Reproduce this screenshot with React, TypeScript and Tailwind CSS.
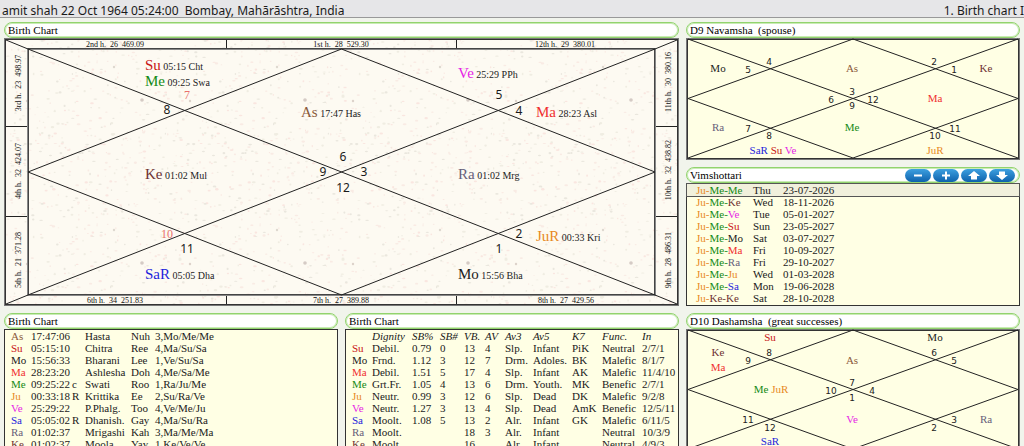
import React from "react";

type Label = [x: number, y: number, text: string, color?: string];

const C: Record<string, string> = {
  As: "#8b5a3c",
  Su: "#c81414",
  Mo: "#1a1a1a",
  Ma: "#f03030",
  Me: "#148a14",
  Ju: "#e88a1e",
  Ve: "#e61ee6",
  Sa: "#1e1edc",
  Ra: "#66607a",
  Ke: "#6e3232",
};

const colorOf = (name: string) => C[name.slice(0, 2)];

const SERIF = "'Liberation Serif', serif";
const SANS = "'DejaVu Sans', sans-serif";
const NUMBERS = "'Noto Sans', sans-serif";

function seeded(seed: number) {
  let a = seed;
  return () => {
    a = (a + 0x6d2b79f5) | 0;
    let t = Math.imul(a ^ (a >>> 15), 1 | a);
    t = (t + Math.imul(t ^ (t >>> 7), 61 | t)) ^ t;
    return ((t ^ (t >>> 14)) >>> 0) / 4294967296;
  };
}

const TILE = 163;
const rand = seeded(4217);
const SPECKS = Array.from({ length: 420 }, () => ({
  x: rand() * TILE,
  y: rand() * TILE,
  rx: 0.5 + rand() * 1.4,
  ry: 0.4 + rand() * 0.8,
  fill: ["#fae6e0", "#f0ede2", "#f9ebe4", "#eae7de"][Math.floor(rand() * 4)],
}));

function Title({ children, extra }: { children: React.ReactNode; extra?: React.ReactNode }) {
  return (
    <div className="flex h-4 items-center justify-between rounded-full border border-[#92d36e] bg-white pr-1 pl-[3px] ring-1 ring-[#c9ebb5] ring-inset">
      <h2 className="font-['Liberation_Serif',serif] text-[11px] leading-[14px] whitespace-pre text-black">{children}</h2>
      {extra}
    </div>
  );
}

function Panel({
  title,
  extra,
  className = "",
  children,
}: {
  title: string;
  extra?: React.ReactNode;
  className?: string;
  children: React.ReactNode;
}) {
  return (
    <section className={className}>
      <Title extra={extra}>{title}</Title>
      {children}
    </section>
  );
}

const PLANETS: { x: number; y: number; name: string; pos: string }[] = [
  { x: 141, y: 32, name: "Su", pos: "05:15 Cht" },
  { x: 141, y: 48, name: "Me", pos: "09:25 Swa" },
  { x: 297, y: 79, name: "As", pos: "17:47 Has" },
  { x: 454, y: 40, name: "Ve", pos: "25:29 PPh" },
  { x: 532, y: 79, name: "Ma", pos: "28:23 Asl" },
  { x: 141, y: 141, name: "Ke", pos: "01:02 Mul" },
  { x: 454, y: 141, name: "Ra", pos: "01:02 Mrg" },
  { x: 532, y: 203, name: "JuR", pos: "00:33 Kri" },
  { x: 141, y: 241, name: "SaR", pos: "05:05 Dha" },
  { x: 454, y: 241, name: "Mo", pos: "15:56 Bha" },
];

const HOUSES: Label[] = [
  [163, 76, "8"],
  [495, 61, "5"],
  [515, 77, "4"],
  [339, 123, "6"],
  [319, 138, "9"],
  [360, 138, "3"],
  [339, 154, "12"],
  [183, 215, "11"],
  [515, 200, "2"],
  [495, 215, "1"],
];

const RED_HOUSES: Label[] = [
  [183, 61, "7"],
  [163, 200, "10"],
];

const EDGES: { x: number; y: number; text: string; turned?: boolean }[] = [
  { x: 111, y: 9, text: "2nd h.  26  469.09" },
  { x: 337, y: 9, text: "1st h.  28  529.30" },
  { x: 561, y: 9, text: "12th h.  29  380.01" },
  { x: 111, y: 265, text: "6th h.  34  251.83" },
  { x: 337, y: 265, text: "7th h.  27  389.88" },
  { x: 562, y: 265, text: "8th h.  27  429.56" },
  { x: 13, y: 45, text: "3rd h.  23  498.97", turned: true },
  { x: 13, y: 133, text: "4th h.  32  424.07", turned: true },
  { x: 13, y: 222, text: "5th h.  21  371.28", turned: true },
  { x: 663, y: 44, text: "11th h.  30  380.16", turned: true },
  { x: 663, y: 132, text: "10th h.  32  438.82", turned: true },
  { x: 663, y: 222, text: "9th h.  28  486.31", turned: true },
];

function BirthChart() {
  return (
    <svg viewBox="0 0 675 268" className="block w-full" role="img" aria-label="Birth chart">
      <defs>
        <pattern id="paper" width={TILE} height={TILE} patternUnits="userSpaceOnUse">
          <rect width={TILE} height={TILE} fill="#fdfaf2" />
          {SPECKS.map((s, i) => (
            <ellipse key={i} cx={s.x} cy={s.y} rx={s.rx} ry={s.ry} fill={s.fill} />
          ))}
          <circle cx="138" cy="62" r="1.8" fill="#d5cbc5" />
          <circle cx="110" cy="29" r="1.2" fill="#dfd9d0" />
          <circle cx="23" cy="63" r="1.2" fill="#ddd2ca" />
        </pattern>
      </defs>
      <rect x="1" y="1" width="673" height="266" fill="url(#paper)" stroke="#777" strokeWidth="2" />
      <rect x="1.5" y="1.5" width="672" height="265" fill="none" stroke="#333" />
      <rect x="24" y="11" width="627" height="246" fill="none" stroke="#888" strokeWidth="2" />
      <rect x="24.5" y="10.5" width="626" height="246" fill="none" stroke="#444" />
      <g stroke="#222" strokeWidth="1" fill="none">
        <path d="M24 11 651 257M651 11 24 257M337.5 11 24 134 337.5 257 651 134Z" />
        <path d="M2 2 24 11M673 2 651 11M2 266 24 257M673 266 651 257" />
        <path d="M222.5 2V10M452.5 2V10M222.5 258V266M452.5 258V266M2 88.5H23M2 178.5H23M652 88.5H673M652 178.5H673" />
      </g>
      <g fontFamily={SERIF} fontSize="8" fill="#111" textAnchor="middle">
        {EDGES.map((e) => (
          <text
            key={e.text}
            x={e.x}
            y={e.y}
            className="whitespace-pre"
            transform={e.turned ? `rotate(-90 ${e.x} ${e.y}) translate(0 4)` : undefined}
          >
            {e.text}
          </text>
        ))}
      </g>
      <g fontFamily={SERIF}>
        {PLANETS.map((p) => (
          <text key={p.name} x={p.x} y={p.y}>
            <tspan fontSize="15" fill={colorOf(p.name)}>{p.name}</tspan>
            <tspan fontSize="10" fill="#222">{" " + p.pos}</tspan>
          </text>
        ))}
      </g>
      <g fontFamily={NUMBERS} fontSize="12" fill="#1a1a1a" textAnchor="middle">
        {HOUSES.map(([x, y, t]) => (
          <text key={t} x={x} y={y}>{t}</text>
        ))}
      </g>
      <g fontFamily={SERIF} fontSize="12" fill="#e8706c" textAnchor="middle">
        {RED_HOUSES.map(([x, y, t]) => (
          <text key={t} x={x} y={y}>{t}</text>
        ))}
      </g>
    </svg>
  );
}

type Group = { x: number; y: number; names: string[] };

function SmallChart({ label, planets, houses }: { label: string; planets: Group[]; houses: Label[] }) {
  return (
    <svg viewBox="0 0 334 122" className="block w-full" role="img" aria-label={label}>
      <rect x="1" y="1" width="332" height="120" fill="#ffffe4" stroke="#777" strokeWidth="2" />
      <rect x="1.5" y="1.5" width="331" height="119" fill="none" stroke="#333" />
      <path
        d="M2 1 332 120M332 1 2 120M167 1 2 60.5 167 120 332 60.5Z"
        fill="none"
        stroke="#222"
        strokeWidth="1"
      />
      <g fontFamily={SERIF} fontSize="11" textAnchor="middle">
        {planets.map((g) => (
          <text key={g.names.join()} x={g.x} y={g.y}>
            {g.names.map((n, i) => (
              <tspan key={n} fill={colorOf(n)}>{(i ? " " : "") + n}</tspan>
            ))}
          </text>
        ))}
      </g>
      <g fontFamily={SANS} fontSize="9" fill="#222" textAnchor="middle">
        {houses.map(([x, y, t]) => (
          <text key={t} x={x} y={y}>{t}</text>
        ))}
      </g>
    </svg>
  );
}

const D9_PLANETS: Group[] = [
  { x: 32, y: 34, names: ["Mo"] },
  { x: 166, y: 34, names: ["As"] },
  { x: 300, y: 34, names: ["Ke"] },
  { x: 249, y: 64, names: ["Ma"] },
  { x: 32, y: 93, names: ["Ra"] },
  { x: 166, y: 93, names: ["Me"] },
  { x: 87, y: 116, names: ["SaR", "Su", "Ve"] },
  { x: 249, y: 116, names: ["JuR"] },
];

const D9_HOUSES: Label[] = [
  [83, 27, "4"],
  [62, 35, "5"],
  [248, 27, "2"],
  [268, 35, "1"],
  [166, 57, "3"],
  [145, 65, "6"],
  [187, 65, "12"],
  [166, 71, "9"],
  [62, 94, "7"],
  [83, 101, "8"],
  [249, 101, "10"],
  [269, 94, "11"],
];

const D10_PLANETS: Group[] = [
  { x: 84, y: 12, names: ["Su"] },
  { x: 249, y: 12, names: ["Mo"] },
  { x: 32, y: 27, names: ["Ke"] },
  { x: 32, y: 42, names: ["Ma"] },
  { x: 166, y: 35, names: ["As"] },
  { x: 85, y: 64, names: ["Me", "JuR"] },
  { x: 166, y: 94, names: ["Ve"] },
  { x: 300, y: 94, names: ["Ra"] },
  { x: 84, y: 116, names: ["SaR"] },
];

const D10_HOUSES: Label[] = [
  [83, 27, "8"],
  [62, 35, "9"],
  [248, 27, "6"],
  [268, 35, "5"],
  [166, 57, "7"],
  [145, 65, "10"],
  [186, 65, "4"],
  [166, 72, "1"],
  [62, 94, "11"],
  [84, 102, "12"],
  [248, 102, "2"],
  [268, 94, "3"],
];

const DASHAS: [string, string, string][] = [
  ["Ju-Me-Me", "Thu", "23-07-2026"],
  ["Ju-Me-Ke", "Wed", "18-11-2026"],
  ["Ju-Me-Ve", "Tue", "05-01-2027"],
  ["Ju-Me-Su", "Sun", "23-05-2027"],
  ["Ju-Me-Mo", "Sat", "03-07-2027"],
  ["Ju-Me-Ma", "Fri", "10-09-2027"],
  ["Ju-Me-Ra", "Fri", "29-10-2027"],
  ["Ju-Me-Ju", "Wed", "01-03-2028"],
  ["Ju-Me-Sa", "Mon", "19-06-2028"],
  ["Ju-Ke-Ke", "Sat", "28-10-2028"],
];

function Periods() {
  return (
    <div className="h-[123px] border border-[#333] bg-[#ffffe4]">
      <table className="w-full table-fixed border-collapse text-[11px] leading-3">
        <colgroup>
          <col className="w-[66px]" />
          <col className="w-[30px]" />
          <col />
        </colgroup>
        <tbody>
          {DASHAS.map(([lords, day, date], row) => (
            <tr key={date} className={row === 0 ? "bg-[#f1f0dc] outline outline-[#555]" : ""}>
              <td className="p-0 pl-[9px] whitespace-nowrap">
                {lords.split("-").map((l, i) => (
                  <span key={i} style={{ color: colorOf(l) }}>
                    {l}
                    {i < 2 ? "-" : ""}
                  </span>
                ))}
              </td>
              <td className="p-0">{day}</td>
              <td className="p-0">{date}</td>
            </tr>
          ))}
        </tbody>
      </table>
    </div>
  );
}

const BUTTONS: { label: string; d: string }[] = [
  { label: "Collapse level", d: "M8 5.5h8v2H8z" },
  { label: "Expand level", d: "M8 5.5h3v-3h2v3h3v2h-3v3h-2v-3H8z" },
  { label: "Previous periods", d: "M12 2 18 7h-3v3.5H9V7H6z" },
  { label: "Next periods", d: "M12 11 18 6h-3V2.5H9V6H6z" },
];

function PeriodButtons() {
  return (
    <div className="flex gap-[2px]">
      {BUTTONS.map((b) => (
        <button
          key={b.label}
          type="button"
          aria-label={b.label}
          className="h-[13px] w-[26px] rounded-full bg-linear-to-b from-[#3da0e0] to-[#0d62ac]"
        >
          <svg viewBox="0 0 24 13" className="mx-auto block h-[13px] w-6" fill="#fff">
            <path d={b.d} />
          </svg>
        </button>
      ))}
    </div>
  );
}

const POSITIONS: string[][] = [
  ["As", "17:47:06", "", "Hasta", "Nuh", "3,Mo/Me/Me"],
  ["Su", "05:15:10", "", "Chitra", "Ree", "4,Ma/Su/Sa"],
  ["Mo", "15:56:33", "", "Bharani", "Lee", "1,Ve/Su/Sa"],
  ["Ma", "28:23:20", "", "Ashlesha", "Doh", "4,Me/Sa/Me"],
  ["Me", "09:25:22", "c", "Swati", "Roo", "1,Ra/Ju/Me"],
  ["Ju", "00:33:18", "R", "Krittika", "Ee", "2,Su/Ra/Ve"],
  ["Ve", "25:29:22", "", "P.Phalg.", "Too", "4,Ve/Me/Ju"],
  ["Sa", "05:05:02", "R", "Dhanish.", "Gay", "4,Ma/Su/Ra"],
  ["Ra", "01:02:37", "", "Mrigashi", "Kah", "3,Ma/Me/Ma"],
  ["Ke", "01:02:37", "", "Moola", "Yay", "1,Ke/Ve/Ve"],
];

const DIGNITY_HEAD = ["", "Dignity", "SB%", "SB#", "VB.", "AV", "Av3", "Av5", "K7", "Func.", "In"];

const DIGNITIES: string[][] = [
  ["Su", "Debil.", "0.79", "0", "13", "4", "Slp.", "Infant", "PiK", "Neutral", "2/7/1"],
  ["Mo", "Frnd.", "1.12", "3", "12", "7", "Drm.", "Adoles.", "BK", "Malefic", "8/1/7"],
  ["Ma", "Debil.", "1.51", "5", "17", "4", "Slp.", "Infant", "AK", "Malefic", "11/4/10"],
  ["Me", "Grt.Fr.", "1.05", "4", "13", "6", "Drm.", "Youth.", "MK", "Benefic", "2/7/1"],
  ["Ju", "Neutr.", "0.99", "3", "12", "6", "Slp.", "Dead", "DK", "Malefic", "9/2/8"],
  ["Ve", "Neutr.", "1.27", "3", "13", "4", "Slp.", "Dead", "AmK", "Benefic", "12/5/11"],
  ["Sa", "Moolt.", "1.08", "5", "13", "2", "Alr.", "Infant", "GK", "Malefic", "6/11/5"],
  ["Ra", "Moolt.", "", "", "18", "3", "Alr.", "Infant", "", "Neutral", "10/3/9"],
  ["Ke", "Moolt.", "", "", "16", "", "Alr.", "Infant", "", "Neutral", "4/9/3"],
];

function DataTable({ cols, head, rows }: { cols: string[]; head?: string[]; rows: string[][] }) {
  return (
    <div className="border border-[#333] bg-[#ffffe4] pl-[6px]">
      <table className="w-full table-fixed border-collapse text-[11px] leading-3">
        <colgroup>
          {cols.map((c, i) => (
            <col key={i} className={c} />
          ))}
        </colgroup>
        {head && (
          <thead>
            <tr>
              {head.map((h, i) => (
                <th key={i} className="p-0 text-left font-normal whitespace-nowrap italic">{h}</th>
              ))}
            </tr>
          </thead>
        )}
        <tbody>
          {rows.map((r) => (
            <tr key={r[0]}>
              {r.map((cell, i) => (
                <td key={i} className="h-3 p-0 whitespace-nowrap" style={i === 0 ? { color: colorOf(cell) } : undefined}>
                  {cell}
                </td>
              ))}
            </tr>
          ))}
        </tbody>
      </table>
    </div>
  );
}

export default function App() {
  return (
    <div className="h-screen overflow-hidden bg-[#f1f4ec] font-['Liberation_Serif',serif] text-[#1a1a1a]">
      <header className="flex h-[18px] items-center justify-between border-b border-[#999] bg-[#e6e6e8] pt-1 pl-[2px] font-['Noto_Sans',sans-serif] text-[12px] leading-[14px] whitespace-pre">
        <h1>
          amit shah 22 Oct 1964 05:24:00{"  "}Bombay, Mahārāshtra, India
        </h1>
        <span>1. Birth chart I</span>
      </header>
      <main className="grid grid-cols-3 gap-x-[7px] gap-y-[7px] px-1 pt-1">
        <Panel title="Birth Chart" className="col-span-2">
          <BirthChart />
        </Panel>
        <div className="flex flex-col gap-[7px]">
          <Panel title="D9 Navamsha  (spouse)">
            <SmallChart label="D9 Navamsha" planets={D9_PLANETS} houses={D9_HOUSES} />
          </Panel>
          <Panel title="Vimshottari" extra={<PeriodButtons />}>
            <Periods />
          </Panel>
        </div>
        <Panel title="Birth Chart">
          <DataTable
            cols={["w-[20px]", "w-[41px]", "w-[13px]", "w-[46px]", "w-[24px]", ""]}
            rows={POSITIONS}
          />
        </Panel>
        <Panel title="Birth Chart">
          <DataTable
            cols={["w-[20px]", "w-[40px]", "w-[28px]", "w-[24px]", "w-[21px]", "w-[20px]", "w-[28px]", "w-[39px]", "w-[30px]", "w-[40px]", ""]}
            head={DIGNITY_HEAD}
            rows={DIGNITIES}
          />
        </Panel>
        <Panel title="D10 Dashamsha  (great successes)">
          <SmallChart label="D10 Dashamsha" planets={D10_PLANETS} houses={D10_HOUSES} />
        </Panel>
      </main>
    </div>
  );
}
